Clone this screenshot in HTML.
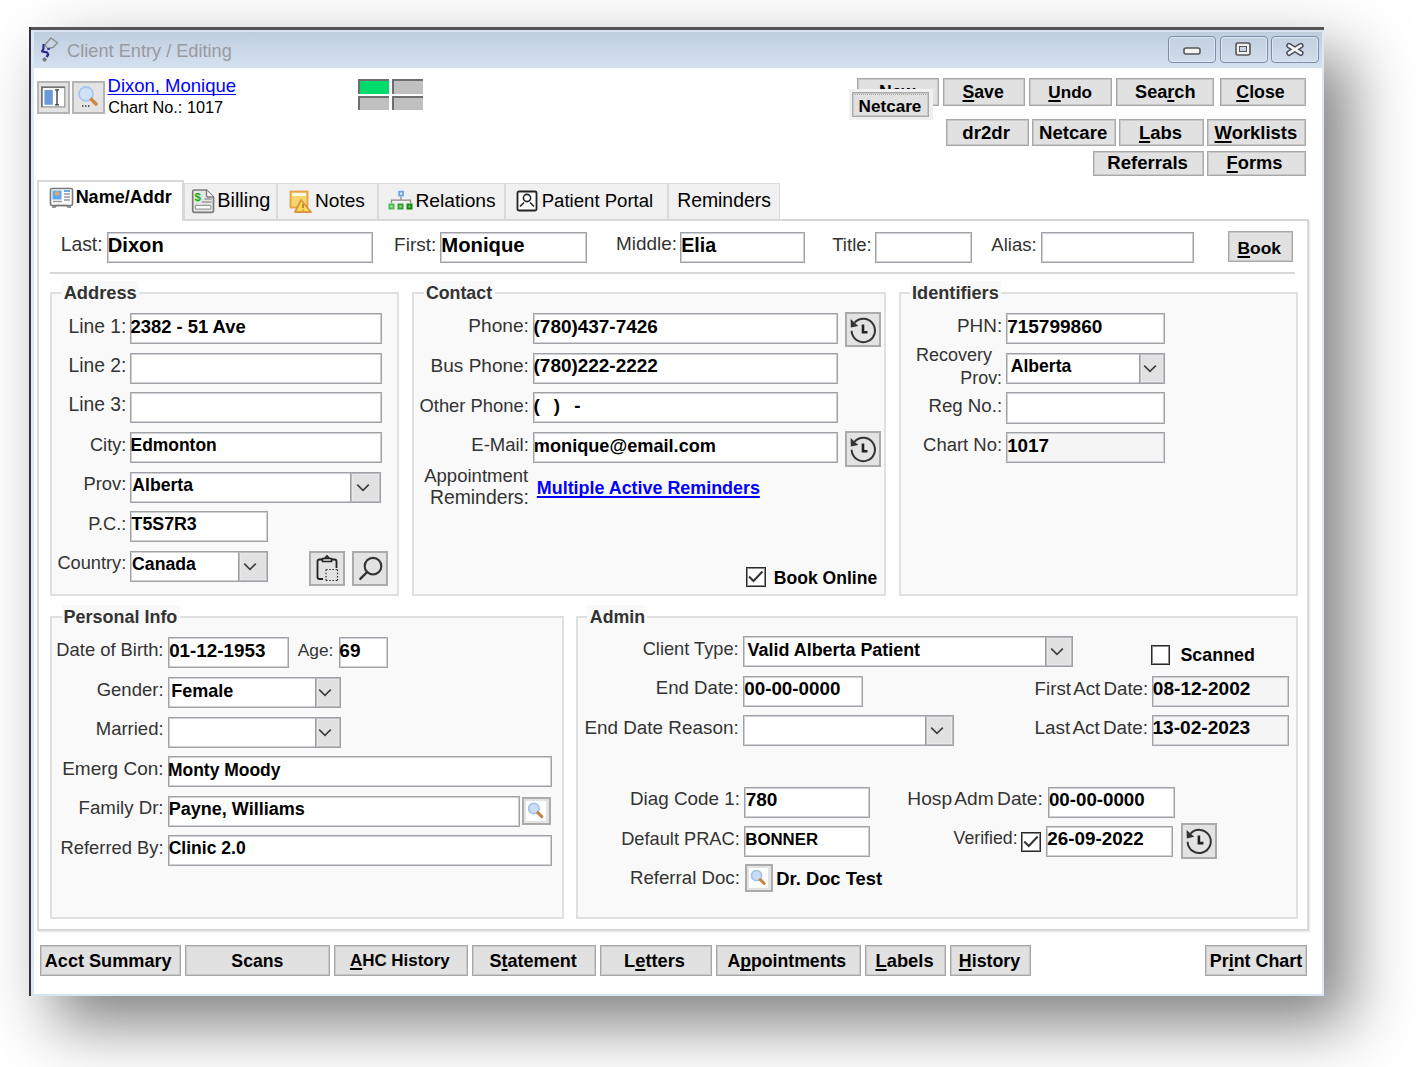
<!DOCTYPE html><html><head><meta charset="utf-8"><style>
html,body{margin:0;padding:0}
body{width:1422px;height:1067px;position:relative;overflow:hidden;background:#fff;font-family:'Liberation Sans', sans-serif}
.a{position:absolute}
svg{display:block}
.t{position:absolute;white-space:nowrap;line-height:1}
u{text-decoration:underline;text-decoration-thickness:1.5px;text-underline-offset:2px;text-decoration-skip-ink:none}
.t{text-decoration-skip-ink:none}
</style></head><body>
<div class="a" style="left:29px;top:27px;width:1295px;height:969px;box-shadow:25px 28px 60px rgba(0,0,0,0.5);background:#fff"></div>
<div class="a" style="left:29px;top:27px;width:1295px;height:41px;background:linear-gradient(#bccbdb,#d4e1f1)"></div>
<div class="a" style="left:31px;top:30px;width:1291px;height:1.5px;background:#dae3ee"></div>
<div class="a" style="left:29px;top:27px;width:1295px;height:3px;background:#555"></div>
<div class="a" style="left:29px;top:27px;width:2px;height:969px;background:#333"></div>
<div class="a" style="left:31px;top:30px;width:2.5px;height:966px;background:#dce8f5"></div>
<div class="a" style="left:1322px;top:30px;width:2px;height:966px;background:#dce8f5"></div>
<div class="a" style="left:31px;top:994px;width:1293px;height:2px;background:#d6e4f4"></div>
<div class="a" style="left:33.5px;top:68px;width:1288.5px;height:926px;background:#fff"></div>
<svg class="a" style="left:36px;top:34px" width="28" height="28" viewBox="0 0 28 28"><path d="M9 10.5 L15 4 L21.5 9 L17 13.5 L11.5 14.5 Z" fill="none" stroke="#8a8a8a" stroke-width="1.3" stroke-linejoin="round"/><path d="M7.6 10 L7.4 15 L6 17.3 L11 18.3 L12.3 20.5 L10.5 23" fill="none" stroke="#2b2b8c" stroke-width="2.2" stroke-linejoin="round"/><path d="M11.3 15.3 L14 14.6" stroke="#3a3a9a" stroke-width="2"/><circle cx="8.6" cy="25.6" r="2.1" fill="#7a7a7a"/></svg>
<div class="t" style="left:67.09px;top:42px;font-size:18.2px;font-weight:normal;color:#9a9a9e;">Client Entry / Editing</div>
<div class="a" style="left:1167.5px;top:36px;width:48.5px;height:27px;border:1.5px solid #7d8ca6;border-radius:4px;box-sizing:border-box;background:linear-gradient(#c3d0df,#d0dcea);box-shadow:inset 0 0 0 1px #dfe8f2"></div>
<div class="a" style="left:1219.5px;top:36px;width:48.0px;height:27px;border:1.5px solid #7d8ca6;border-radius:4px;box-sizing:border-box;background:linear-gradient(#c3d0df,#d0dcea);box-shadow:inset 0 0 0 1px #dfe8f2"></div>
<div class="a" style="left:1271px;top:36px;width:48px;height:27px;border:1.5px solid #7d8ca6;border-radius:4px;box-sizing:border-box;background:linear-gradient(#c3d0df,#d0dcea);box-shadow:inset 0 0 0 1px #dfe8f2"></div>
<svg class="a" style="left:1181px;top:45px" width="22" height="12" viewBox="0 0 22 12"><rect x="3" y="3" width="16" height="6" rx="2" fill="#f4f4f4" stroke="#555" stroke-width="1.6"/></svg>
<svg class="a" style="left:1234px;top:41px" width="18" height="18" viewBox="0 0 18 18"><rect x="2" y="2" width="14" height="12" rx="2" fill="#f4f4f4" stroke="#555" stroke-width="1.6"/><rect x="5.5" y="5.5" width="7" height="5" fill="#c8d4e2" stroke="#555" stroke-width="1"/></svg>
<svg class="a" style="left:1284px;top:41px" width="22" height="18" viewBox="0 0 22 18"><path d="M5 4.6 L16.8 12.2 M16.8 4.6 L5 12.2" stroke="#4a5160" stroke-width="5.6" stroke-linecap="round"/><path d="M5 4.6 L16.8 12.2 M16.8 4.6 L5 12.2" stroke="#f6f6f6" stroke-width="2.6" stroke-linecap="round"/></svg>
<div class="a" style="left:37px;top:80.5px;width:32.5px;height:33.0px;background:#e3e3e3;border:2px solid #b5b5b5;box-sizing:border-box"></div>
<svg class="a" style="left:37px;top:80.5px" width="33" height="33" viewBox="0 0 33 33"><rect x="4.8" y="6.3" width="23" height="19.6" fill="#fff" stroke="#aaa" stroke-width="1.6"/><path d="M4.8 25.9 V6.3 H27.8" fill="none" stroke="#6e6e6e" stroke-width="1.6"/><rect x="7.4" y="8.9" width="8.4" height="14.9" fill="#6b9bd6"/><path d="M18 8.9 h4 M20 8.9 v14.9 M18 23.8 h4" stroke="#333" stroke-width="1.3" fill="none"/></svg>
<div class="a" style="left:72px;top:80.5px;width:33px;height:33.0px;background:#e3e3e3;border:2px solid #b5b5b5;box-sizing:border-box"></div>
<svg class="a" style="left:72px;top:80.5px" width="33" height="33" viewBox="0 0 33 33"><circle cx="14" cy="13" r="7" fill="#cfe2f7" stroke="#a9c8ee" stroke-width="1.8"/><path d="M19.5 18.5 L24 23" stroke="#c88a45" stroke-width="3.6" stroke-linecap="round"/><path d="M10 25 h1.4 M13 25 h1.4 M16 25 h1.4" stroke="#333" stroke-width="1.4"/></svg>
<div class="t" style="left:107.52px;top:77px;font-size:18.5px;font-weight:normal;color:#0000ff;text-decoration:underline;text-decoration-thickness:1.2px;text-underline-offset:2px">Dixon, Monique</div>
<div class="t" style="left:108.18px;top:99px;font-size:16.3px;font-weight:normal;color:#000;">Chart No.: 1017</div>
<div class="a" style="left:358px;top:79px;width:31px;height:14.5px;background:#00dc6b;border-top:2.5px solid #6e6e6e;border-left:2.5px solid #6e6e6e;box-sizing:border-box"></div>
<div class="a" style="left:391.5px;top:79px;width:31.0px;height:14.5px;background:#c0c0c0;border-top:2.5px solid #6e6e6e;border-left:2.5px solid #6e6e6e;box-sizing:border-box"></div>
<div class="a" style="left:358px;top:96px;width:31px;height:14px;background:#c0c0c0;border-top:2.5px solid #6e6e6e;border-left:2.5px solid #6e6e6e;box-sizing:border-box"></div>
<div class="a" style="left:391.5px;top:96px;width:31.0px;height:14px;background:#c0c0c0;border-top:2.5px solid #6e6e6e;border-left:2.5px solid #6e6e6e;box-sizing:border-box"></div>
<div class="a" style="left:857px;top:77.5px;width:81.5px;height:28.0px;background:#e1e1e1;border:1px solid #a8a8a8;box-shadow:inset 0 0 0 1px #c8c8c8;box-sizing:border-box"></div>
<div class="t" style="left:878.94px;top:84px;font-size:17.7px;font-weight:bold;color:#000">New</div>
<div class="a" style="left:942.5px;top:77.5px;width:82.5px;height:28.0px;background:#e1e1e1;border:1px solid #a8a8a8;box-shadow:inset 0 0 0 1px #c8c8c8;box-sizing:border-box"></div>
<div class="t" style="left:962.47px;top:84px;font-size:17.67px;font-weight:bold;color:#000"><u>S</u>ave</div>
<div class="a" style="left:1029px;top:77.5px;width:83px;height:28.0px;background:#e1e1e1;border:1px solid #a8a8a8;box-shadow:inset 0 0 0 1px #c8c8c8;box-sizing:border-box"></div>
<div class="t" style="left:1048.37px;top:84px;font-size:17.11px;font-weight:bold;color:#000"><u>U</u>ndo</div>
<div class="a" style="left:1115.5px;top:77.5px;width:98.5px;height:28.0px;background:#e1e1e1;border:1px solid #a8a8a8;box-shadow:inset 0 0 0 1px #c8c8c8;box-sizing:border-box"></div>
<div class="t" style="left:1135.06px;top:83px;font-size:18.12px;font-weight:bold;color:#000">Sea<u>r</u>ch</div>
<div class="a" style="left:1219.5px;top:77.5px;width:86.0px;height:28.0px;background:#e1e1e1;border:1px solid #a8a8a8;box-shadow:inset 0 0 0 1px #c8c8c8;box-sizing:border-box"></div>
<div class="t" style="left:1236.29px;top:84px;font-size:17.81px;font-weight:bold;color:#000"><u>C</u>lose</div>
<div class="a" style="left:849px;top:89px;width:84px;height:31px;background:#f0f0f0"></div>
<div class="a" style="left:852px;top:92px;width:77px;height:25px;background:#e1e1e1;border:1px solid #a8a8a8;box-shadow:inset 0 0 0 1px #c8c8c8;box-sizing:border-box"></div>
<div class="t" style="left:858.59px;top:98px;font-size:17.11px;font-weight:bold;color:#000">Netcare</div>
<div class="a" style="left:855px;top:94px;width:71px;height:1px;border-top:1px dotted #a8a8a8"></div>
<div class="a" style="left:945.5px;top:118.5px;width:83.0px;height:27.0px;background:#e1e1e1;border:1px solid #a8a8a8;box-shadow:inset 0 0 0 1px #c8c8c8;box-sizing:border-box"></div>
<div class="t" style="left:962.35px;top:124px;font-size:18.64px;font-weight:bold;color:#000">dr2dr</div>
<div class="a" style="left:1032px;top:118.5px;width:83.5px;height:27.0px;background:#e1e1e1;border:1px solid #a8a8a8;box-shadow:inset 0 0 0 1px #c8c8c8;box-sizing:border-box"></div>
<div class="t" style="left:1038.99px;top:124px;font-size:18.63px;font-weight:bold;color:#000">Netcare</div>
<div class="a" style="left:1119px;top:118.5px;width:84.5px;height:27.0px;background:#e1e1e1;border:1px solid #a8a8a8;box-shadow:inset 0 0 0 1px #c8c8c8;box-sizing:border-box"></div>
<div class="t" style="left:1138.9px;top:124px;font-size:18.43px;font-weight:bold;color:#000"><u>L</u>abs</div>
<div class="a" style="left:1207px;top:118.5px;width:98.5px;height:27.0px;background:#e1e1e1;border:1px solid #a8a8a8;box-shadow:inset 0 0 0 1px #c8c8c8;box-sizing:border-box"></div>
<div class="t" style="left:1214.6px;top:124px;font-size:18.42px;font-weight:bold;color:#000"><u>W</u>orklists</div>
<div class="a" style="left:1093px;top:150.5px;width:110.5px;height:25.0px;background:#e1e1e1;border:1px solid #a8a8a8;box-shadow:inset 0 0 0 1px #c8c8c8;box-sizing:border-box"></div>
<div class="t" style="left:1107.29px;top:154px;font-size:18.63px;font-weight:bold;color:#000">Referrals</div>
<div class="a" style="left:1207px;top:150.5px;width:98.5px;height:25.0px;background:#e1e1e1;border:1px solid #a8a8a8;box-shadow:inset 0 0 0 1px #c8c8c8;box-sizing:border-box"></div>
<div class="t" style="left:1226.61px;top:154px;font-size:18.27px;font-weight:bold;color:#000"><u>F</u>orms</div>
<div class="a" style="left:183.5px;top:183px;width:93.7px;height:37px;background:#f0f0f0;border:1.5px solid #dadada;box-sizing:border-box"></div>
<div class="a" style="left:277.2px;top:183px;width:100.8px;height:37px;background:#f0f0f0;border:1.5px solid #dadada;box-sizing:border-box"></div>
<div class="a" style="left:378px;top:183px;width:126.5px;height:37px;background:#f0f0f0;border:1.5px solid #dadada;box-sizing:border-box"></div>
<div class="a" style="left:504.5px;top:183px;width:163.0px;height:37px;background:#f0f0f0;border:1.5px solid #dadada;box-sizing:border-box"></div>
<div class="a" style="left:667.5px;top:183px;width:112.5px;height:37px;background:#f0f0f0;border:1.5px solid #dadada;box-sizing:border-box"></div>
<div class="a" style="left:37px;top:219px;width:1272px;height:712px;background:#fff;border:2px solid #d8d8d8;box-sizing:border-box;box-shadow:1.5px 1.5px 0 #eeeeee"></div>
<div class="a" style="left:37px;top:179.5px;width:147px;height:41.5px;background:#fff;border:2px solid #d8d8d8;border-bottom:none;box-sizing:border-box"></div>
<svg class="a" style="left:48.5px;top:186.5px" width="25" height="22" viewBox="0 0 25 22"><rect x="1.5" y="1.5" width="22" height="17" rx="1.5" fill="#fff" stroke="#777" stroke-width="1.6"/><path d="M3 20 h3 l1.5 -1.5 h10 l1.5 1.5 h3" fill="none" stroke="#777" stroke-width="1.6"/><rect x="3.5" y="3.5" width="9" height="9" fill="#5ea8f0"/><circle cx="8" cy="6.5" r="2.2" fill="#e8a46a"/><path d="M15 4 h6" stroke="#3a8fe0" stroke-width="1.5"/><path d="M15 7 h6 M15 10 h6 M15 13 h6 M4 14.5 h9" stroke="#999" stroke-width="1.3"/></svg>
<div class="t" style="left:75.63px;top:188px;font-size:18px;font-weight:bold;color:#000;">Name/Addr</div>
<svg class="a" style="left:191px;top:187.5px" width="25" height="26" viewBox="0 0 25 26"><path d="M3.5 2 H15.5 L22.5 9 V22.5 Q22.5 24.3 20.7 24.3 H3.5 Q1.7 24.3 1.7 22.5 V3.8 Q1.7 2 3.5 2 Z" fill="#e6e6e6" stroke="#7c7c7c" stroke-width="1.7"/><path d="M15.5 2.3 V7.5 Q15.5 9 17 9 H22.3" fill="#fafafa" stroke="#7c7c7c" stroke-width="1.4"/><text x="3.6" y="12.6" font-size="11.5" font-weight="bold" fill="#14b014" font-family="Liberation Sans">$</text><path d="M13.5 11 h7 M11 14 h9.5" stroke="#9a9a9a" stroke-width="1.3"/><rect x="4.3" y="17.3" width="15.5" height="3.8" rx="1" fill="#fff" stroke="#9a9a9a" stroke-width="1.2"/></svg>
<div class="t" style="left:217.21px;top:191px;font-size:19.92px;font-weight:normal;color:#000;">Billing</div>
<svg class="a" style="left:288.5px;top:189.5px" width="24" height="24" viewBox="0 0 24 24"><rect x="1.5" y="1.5" width="17" height="16" fill="#f6d56a" stroke="#e9a04a" stroke-width="1.8"/><rect x="3" y="3" width="14" height="3" fill="#fff8e0"/><path d="M12 10 L22 22 H6 Z" fill="#f7dc5a" stroke="#dc9442" stroke-width="1.8" stroke-linejoin="round"/><path d="M14 14 v4 M14 19.5 v1" stroke="#a0701e" stroke-width="1.4"/></svg>
<div class="t" style="left:314.97px;top:191px;font-size:19.12px;font-weight:normal;color:#000;">Notes</div>
<svg class="a" style="left:387.5px;top:189.5px" width="26" height="21" viewBox="0 0 26 21"><rect x="10.3" y="0.8" width="5.6" height="5.6" fill="#6aa2e8"/><rect x="12" y="2.5" width="2.2" height="2.2" fill="#d8e6f8"/><path d="M3.5 13 V10.2 H22.5 V13 M13 6.5 V10.2" fill="none" stroke="#8a8a8a" stroke-width="1.3"/><rect x="0.5" y="13.5" width="6" height="6" fill="#4cb84c"/><rect x="2.4" y="15.4" width="2.2" height="2.2" fill="#b8e2b8"/><rect x="9.5" y="13.5" width="6" height="6" fill="#2fa02f"/><rect x="11.4" y="15.4" width="2.2" height="2.2" fill="#9fd49f"/><rect x="18.5" y="13.5" width="6" height="6" fill="#128a12"/><rect x="20.4" y="15.4" width="2.2" height="2.2" fill="#6cbf6c"/></svg>
<div class="t" style="left:415.46px;top:191px;font-size:19.24px;font-weight:normal;color:#000;">Relations</div>
<svg class="a" style="left:515.5px;top:189.5px" width="22" height="22" viewBox="0 0 22 22"><rect x="1.5" y="1.5" width="19" height="19" rx="1.5" fill="#fff" stroke="#222" stroke-width="1.8"/><circle cx="11" cy="8" r="3.6" fill="none" stroke="#222" stroke-width="1.6"/><path d="M4 16.5 L8 12.5 M18 16.5 L14 12.5" stroke="#222" stroke-width="1.6"/></svg>
<div class="t" style="left:541.71px;top:192px;font-size:18.58px;font-weight:normal;color:#000;">Patient Portal</div>
<div class="t" style="left:677.15px;top:191px;font-size:19.39px;font-weight:normal;color:#000;">Reminders</div>
<div class="t" style="left:60.65px;top:235px;font-size:19.35px;font-weight:normal;color:#333;">Last:</div>
<div class="a" style="left:107px;top:231.5px;width:265.5px;height:31.0px;background:#fff;border:1px solid #a0a2a8;box-shadow:inset 0 0 0 1px #cfd0d4;box-sizing:border-box"></div>
<div class="t" style="left:107.79px;top:235px;font-size:20.15px;font-weight:bold;color:#000;">Dixon</div>
<div class="t" style="left:394.08px;top:235px;font-size:18.98px;font-weight:normal;color:#333;">First:</div>
<div class="a" style="left:440.3px;top:231.5px;width:146.5px;height:31.0px;background:#fff;border:1px solid #a0a2a8;box-shadow:inset 0 0 0 1px #cfd0d4;box-sizing:border-box"></div>
<div class="t" style="left:441.28px;top:235px;font-size:20.27px;font-weight:bold;color:#000;">Monique</div>
<div class="t" style="left:615.98px;top:235px;font-size:18.95px;font-weight:normal;color:#333;">Middle:</div>
<div class="a" style="left:680.2px;top:231.5px;width:124.4px;height:31.0px;background:#fff;border:1px solid #a0a2a8;box-shadow:inset 0 0 0 1px #cfd0d4;box-sizing:border-box"></div>
<div class="t" style="left:681.22px;top:236px;font-size:19.65px;font-weight:bold;color:#000;">Elia</div>
<div class="t" style="left:832.23px;top:236px;font-size:18.56px;font-weight:normal;color:#333;">Title:</div>
<div class="a" style="left:875px;top:231.5px;width:97px;height:31.0px;background:#fff;border:1px solid #a0a2a8;box-shadow:inset 0 0 0 1px #cfd0d4;box-sizing:border-box"></div>
<div class="t" style="left:991.3px;top:236px;font-size:18.56px;font-weight:normal;color:#333;">Alias:</div>
<div class="a" style="left:1041.1px;top:231.5px;width:152.9px;height:31.0px;background:#fff;border:1px solid #a0a2a8;box-shadow:inset 0 0 0 1px #cfd0d4;box-sizing:border-box"></div>
<div class="a" style="left:1228.4px;top:231px;width:64.4px;height:31.3px;background:#e1e1e1;border:1px solid #a8a8a8;box-shadow:inset 0 0 0 1px #c8c8c8;box-sizing:border-box"></div>
<div class="t" style="left:1237.47px;top:240px;font-size:17.41px;font-weight:bold;color:#000"><u>B</u>ook</div>
<div class="a" style="left:50px;top:271.5px;width:1245px;height:2.0px;background:#d8d8d8"></div>
<div class="a" style="left:50px;top:291.5px;width:348.5px;height:304.5px;background:#f9f9f9;border:2px solid #e0e0e0;box-sizing:border-box"></div>
<div class="a" style="left:61.1px;top:280.5px;width:78.0px;height:19.0px;background:#f9f9f9"></div>
<div class="t" style="left:63.64px;top:284px;font-size:18.3px;font-weight:bold;color:#333;">Address</div>
<div class="t" style="left:68.46px;top:317px;font-size:19.29px;font-weight:normal;color:#333;">Line 1:</div>
<div class="t" style="left:68.46px;top:356px;font-size:19.29px;font-weight:normal;color:#333;">Line 2:</div>
<div class="t" style="left:68.46px;top:395px;font-size:19.29px;font-weight:normal;color:#333;">Line 3:</div>
<div class="t" style="left:89.99px;top:436px;font-size:18.17px;font-weight:normal;color:#333;">City:</div>
<div class="t" style="left:83.43px;top:475px;font-size:18.38px;font-weight:normal;color:#333;">Prov:</div>
<div class="t" style="left:88.14px;top:515px;font-size:18.23px;font-weight:normal;color:#333;">P.C.:</div>
<div class="t" style="left:57.39px;top:554px;font-size:18.24px;font-weight:normal;color:#333;">Country:</div>
<div class="a" style="left:130px;top:313.2px;width:251.5px;height:31.2px;background:#fff;border:1px solid #a0a2a8;box-shadow:inset 0 0 0 1px #cfd0d4;box-sizing:border-box"></div>
<div class="a" style="left:130px;top:352.8px;width:251.5px;height:31.2px;background:#fff;border:1px solid #a0a2a8;box-shadow:inset 0 0 0 1px #cfd0d4;box-sizing:border-box"></div>
<div class="a" style="left:130px;top:392.3px;width:251.5px;height:31.2px;background:#fff;border:1px solid #a0a2a8;box-shadow:inset 0 0 0 1px #cfd0d4;box-sizing:border-box"></div>
<div class="a" style="left:130px;top:431.8px;width:251.5px;height:31.2px;background:#fff;border:1px solid #a0a2a8;box-shadow:inset 0 0 0 1px #cfd0d4;box-sizing:border-box"></div>
<div class="t" style="left:130.46px;top:318px;font-size:18.4px;font-weight:bold;color:#000;">2382 - 51 Ave</div>
<div class="t" style="left:130.57px;top:437px;font-size:17.43px;font-weight:bold;color:#000;">Edmonton</div>
<div class="a" style="left:130px;top:471.5px;width:251px;height:31.5px;background:#fff;border:1px solid #a0a2a8;box-shadow:inset 0 0 0 1px #cfd0d4;box-sizing:border-box"></div>
<div class="a" style="left:350px;top:471.5px;width:31px;height:31.5px;background:#e1e1e1;border:1px solid #9fa1a6;box-shadow:inset 0 0 0 1px #b9bbbf, inset 0 0 0 2px #e9e9e9;box-sizing:border-box"></div>
<div class="a" style="left:356.3px;top:482.75px;width:14px;height:9px"><svg style="display:block" width="14" height="9" viewBox="0 0 14 9"><path d="M1.2 1.6 L7 7.4 L12.8 1.6" fill="none" stroke="#3c3c3c" stroke-width="1.6"/></svg></div>
<div class="t" style="left:132.36px;top:477px;font-size:17.58px;font-weight:bold;color:#000;">Alberta</div>
<div class="a" style="left:130px;top:511px;width:137.5px;height:31.3px;background:#fff;border:1px solid #a0a2a8;box-shadow:inset 0 0 0 1px #cfd0d4;box-sizing:border-box"></div>
<div class="t" style="left:131.52px;top:516px;font-size:17.79px;font-weight:bold;color:#000;">T5S7R3</div>
<div class="a" style="left:130px;top:550.5px;width:137.5px;height:31.3px;background:#fff;border:1px solid #a0a2a8;box-shadow:inset 0 0 0 1px #cfd0d4;box-sizing:border-box"></div>
<div class="a" style="left:237.5px;top:550.5px;width:30.0px;height:31.3px;background:#e1e1e1;border:1px solid #9fa1a6;box-shadow:inset 0 0 0 1px #b9bbbf, inset 0 0 0 2px #e9e9e9;box-sizing:border-box"></div>
<div class="a" style="left:243.3px;top:561.65px;width:14px;height:9px"><svg style="display:block" width="14" height="9" viewBox="0 0 14 9"><path d="M1.2 1.6 L7 7.4 L12.8 1.6" fill="none" stroke="#3c3c3c" stroke-width="1.6"/></svg></div>
<div class="t" style="left:132.09px;top:556px;font-size:17.68px;font-weight:bold;color:#000;">Canada</div>
<div class="a" style="left:309px;top:550.5px;width:36px;height:35.5px;background:#e3e3e3;border:2px solid #ababab;box-sizing:border-box"></div>
<svg class="a" style="left:309px;top:550.5px" width="36" height="36" viewBox="0 0 36 36"><path d="M13 8.5 H10.5 Q8.5 8.5 8.5 10.5 V26 Q8.5 28 10.5 28 H14" fill="none" stroke="#222" stroke-width="1.8"/><path d="M23 8.5 H25.5 Q27.5 8.5 27.5 10.5 V17" fill="none" stroke="#222" stroke-width="1.8"/><path d="M13.5 7.5 H22.5 V10.5 H13.5 Z M15.5 7.5 L18 5 L20.5 7.5" fill="none" stroke="#222" stroke-width="1.6"/><path d="M17 18.5 H28.5 M17 29.5 H28.5 M17 18.5 V29.5 M28.5 18.5 V29.5" stroke="#333" stroke-width="1.2" stroke-dasharray="1.6 1.6"/></svg>
<div class="a" style="left:351.5px;top:550.5px;width:36.0px;height:35.5px;background:#e3e3e3;border:2px solid #ababab;box-sizing:border-box"></div>
<svg class="a" style="left:351.5px;top:550.5px" width="36" height="36" viewBox="0 0 36 36"><circle cx="21" cy="15.2" r="8.3" fill="none" stroke="#333" stroke-width="2.1"/><path d="M15.2 21 L8.3 27.9" stroke="#333" stroke-width="2.4" stroke-linecap="round"/></svg>
<div class="a" style="left:412px;top:291.5px;width:473.5px;height:304.5px;background:#f9f9f9;border:2px solid #e0e0e0;box-sizing:border-box"></div>
<div class="a" style="left:423.6px;top:280.5px;width:71.3px;height:19.0px;background:#f9f9f9"></div>
<div class="t" style="left:425.89px;top:285px;font-size:17.79px;font-weight:bold;color:#333;">Contact</div>
<div class="t" style="left:468.37px;top:316px;font-size:19.13px;font-weight:normal;color:#333;">Phone:</div>
<div class="t" style="left:430.58px;top:356px;font-size:19.02px;font-weight:normal;color:#333;">Bus Phone:</div>
<div class="t" style="left:419.47px;top:397px;font-size:18.4px;font-weight:normal;color:#333;">Other Phone:</div>
<div class="t" style="left:471.32px;top:436px;font-size:18.5px;font-weight:normal;color:#333;">E-Mail:</div>
<div class="a" style="left:533px;top:313.2px;width:305px;height:31.2px;background:#fff;border:1px solid #a0a2a8;box-shadow:inset 0 0 0 1px #cfd0d4;box-sizing:border-box"></div>
<div class="a" style="left:533px;top:352.8px;width:305px;height:31.2px;background:#fff;border:1px solid #a0a2a8;box-shadow:inset 0 0 0 1px #cfd0d4;box-sizing:border-box"></div>
<div class="a" style="left:533px;top:392.3px;width:305px;height:31.2px;background:#fff;border:1px solid #a0a2a8;box-shadow:inset 0 0 0 1px #cfd0d4;box-sizing:border-box"></div>
<div class="a" style="left:533px;top:431.8px;width:305px;height:31.2px;background:#fff;border:1px solid #a0a2a8;box-shadow:inset 0 0 0 1px #cfd0d4;box-sizing:border-box"></div>
<div class="t" style="left:533.55px;top:318px;font-size:18.95px;font-weight:bold;color:#000;">(780)437-7426</div>
<div class="t" style="left:533.55px;top:357px;font-size:18.96px;font-weight:bold;color:#000;">(780)222-2222</div>
<div class="t" style="left:533.56px;top:397px;font-size:18.8px;font-weight:bold;color:#000;">(</div>
<div class="t" style="left:553.84px;top:397px;font-size:18.8px;font-weight:bold;color:#000;">)</div>
<div class="t" style="left:574.15px;top:397px;font-size:18.8px;font-weight:bold;color:#000;">-</div>
<div class="t" style="left:533.82px;top:437px;font-size:18.16px;font-weight:bold;color:#000;">monique@email.com</div>
<div class="a" style="left:844.7px;top:311.8px;width:36.2px;height:35.6px;background:#e3e3e3;border:2px solid #ababab;box-sizing:border-box"></div>
<svg class="a" style="left:844.7px;top:311.8px" width="36.19999999999993" height="35.599999999999966" viewBox="0 0 36 35"><path d="M6.6 18.5 A11.6 11.6 0 1 0 9.6 10.4" fill="none" stroke="#333" stroke-width="2"/><path d="M5.6 6.8 L5.8 15.2 L13.2 13.6 Z" fill="#333"/><path d="M17.9 12.2 V19.9 H22.4" fill="none" stroke="#222" stroke-width="2.6"/></svg>
<div class="a" style="left:844.7px;top:431px;width:36.2px;height:35.6px;background:#e3e3e3;border:2px solid #ababab;box-sizing:border-box"></div>
<svg class="a" style="left:844.7px;top:431px" width="36.19999999999993" height="35.60000000000002" viewBox="0 0 36 35"><path d="M6.6 18.5 A11.6 11.6 0 1 0 9.6 10.4" fill="none" stroke="#333" stroke-width="2"/><path d="M5.6 6.8 L5.8 15.2 L13.2 13.6 Z" fill="#333"/><path d="M17.9 12.2 V19.9 H22.4" fill="none" stroke="#222" stroke-width="2.6"/></svg>
<div class="t" style="left:424.2px;top:467px;font-size:18.54px;font-weight:normal;color:#333;">Appointment</div>
<div class="t" style="left:429.95px;top:488px;font-size:19.37px;font-weight:normal;color:#333;">Reminders:</div>
<div class="t" style="left:536.84px;top:480px;font-size:17.9px;font-weight:bold;color:#0000ff;text-decoration:underline;text-decoration-thickness:1.5px;text-underline-offset:1.5px">Multiple Active Reminders</div>
<div class="a" style="left:746px;top:567px;width:19.5px;height:19.5px;background:#fff;border:1px solid #2a2a2a;box-shadow:inset 0 0 0 1px #8c8c8c;box-sizing:border-box"></div>
<svg class="a" style="left:746px;top:567px" width="19.5" height="19.5" viewBox="0 0 19.5 19.5"><path d="M3 9.5 L7.5 14 L16.5 4.5" fill="none" stroke="#333" stroke-width="2"/></svg>
<div class="t" style="left:773.86px;top:570px;font-size:17.56px;font-weight:bold;color:#000;">Book Online</div>
<div class="a" style="left:898.5px;top:291.5px;width:399.0px;height:304.5px;background:#f9f9f9;border:2px solid #e0e0e0;box-sizing:border-box"></div>
<div class="a" style="left:910.2px;top:280.5px;width:90.9px;height:19.0px;background:#f9f9f9"></div>
<div class="t" style="left:912.02px;top:284px;font-size:18.16px;font-weight:bold;color:#333;">Identifiers</div>
<div class="t" style="left:956.99px;top:317px;font-size:18.92px;font-weight:normal;color:#333;">PHN:</div>
<div class="a" style="left:1006.3px;top:313.2px;width:159.1px;height:31.2px;background:#fff;border:1px solid #a0a2a8;box-shadow:inset 0 0 0 1px #cfd0d4;box-sizing:border-box"></div>
<div class="t" style="left:1007.14px;top:317px;font-size:19.03px;font-weight:bold;color:#000;">715799860</div>
<div class="t" style="left:916.06px;top:346px;font-size:18.0px;font-weight:normal;color:#333;">Recovery</div>
<div class="t" style="left:960.37px;top:370px;font-size:17.87px;font-weight:normal;color:#333;">Prov:</div>
<div class="a" style="left:1006.3px;top:352.8px;width:159.1px;height:31.2px;background:#fff;border:1px solid #a0a2a8;box-shadow:inset 0 0 0 1px #cfd0d4;box-sizing:border-box"></div>
<div class="a" style="left:1138.6px;top:352.8px;width:26.8px;height:31.2px;background:#e1e1e1;border:1px solid #9fa1a6;box-shadow:inset 0 0 0 1px #b9bbbf, inset 0 0 0 2px #e9e9e9;box-sizing:border-box"></div>
<div class="a" style="left:1142.8px;top:363.9px;width:14px;height:9px"><svg style="display:block" width="14" height="9" viewBox="0 0 14 9"><path d="M1.2 1.6 L7 7.4 L12.8 1.6" fill="none" stroke="#3c3c3c" stroke-width="1.6"/></svg></div>
<div class="t" style="left:1010.76px;top:358px;font-size:17.58px;font-weight:bold;color:#000;">Alberta</div>
<div class="t" style="left:928.41px;top:397px;font-size:18.68px;font-weight:normal;color:#333;">Reg No.:</div>
<div class="a" style="left:1006.3px;top:392.3px;width:159.1px;height:31.3px;background:#fff;border:1px solid #a0a2a8;box-shadow:inset 0 0 0 1px #cfd0d4;box-sizing:border-box"></div>
<div class="t" style="left:923.08px;top:436px;font-size:18.48px;font-weight:normal;color:#333;">Chart No:</div>
<div class="a" style="left:1006.3px;top:431.8px;width:159.1px;height:31.2px;background:#f5f5f5;border:1px solid #a0a2a8;box-shadow:inset 0 0 0 1px #cfd0d4;box-sizing:border-box"></div>
<div class="t" style="left:1007.17px;top:437px;font-size:18.78px;font-weight:bold;color:#000;">1017</div>
<div class="a" style="left:49.5px;top:616px;width:514.5px;height:302.5px;background:#f9f9f9;border:2px solid #e0e0e0;box-sizing:border-box"></div>
<div class="a" style="left:61.7px;top:605px;width:118.0px;height:19px;background:#f9f9f9"></div>
<div class="t" style="left:63.53px;top:608px;font-size:17.98px;font-weight:bold;color:#333;">Personal Info</div>
<div class="t" style="left:56.33px;top:641px;font-size:18.38px;font-weight:normal;color:#333;">Date of Birth:</div>
<div class="a" style="left:168px;top:637.2px;width:120.5px;height:30.8px;background:#fff;border:1px solid #a0a2a8;box-shadow:inset 0 0 0 1px #cfd0d4;box-sizing:border-box"></div>
<div class="t" style="left:169.15px;top:642px;font-size:18.83px;font-weight:bold;color:#000;">01-12-1953</div>
<div class="t" style="left:297.7px;top:642px;font-size:17.35px;font-weight:normal;color:#333;">Age:</div>
<div class="a" style="left:338.5px;top:637.2px;width:49.0px;height:30.8px;background:#fff;border:1px solid #a0a2a8;box-shadow:inset 0 0 0 1px #cfd0d4;box-sizing:border-box"></div>
<div class="t" style="left:339.33px;top:641px;font-size:19.04px;font-weight:bold;color:#000;">69</div>
<div class="t" style="left:96.67px;top:681px;font-size:18.53px;font-weight:normal;color:#333;">Gender:</div>
<div class="a" style="left:168px;top:677px;width:172.5px;height:31px;background:#fff;border:1px solid #a0a2a8;box-shadow:inset 0 0 0 1px #cfd0d4;box-sizing:border-box"></div>
<div class="a" style="left:314.5px;top:677px;width:26.0px;height:31px;background:#e1e1e1;border:1px solid #9fa1a6;box-shadow:inset 0 0 0 1px #b9bbbf, inset 0 0 0 2px #e9e9e9;box-sizing:border-box"></div>
<div class="a" style="left:318.3px;top:688.0px;width:14px;height:9px"><svg style="display:block" width="14" height="9" viewBox="0 0 14 9"><path d="M1.2 1.6 L7 7.4 L12.8 1.6" fill="none" stroke="#3c3c3c" stroke-width="1.6"/></svg></div>
<div class="t" style="left:171.13px;top:682px;font-size:18.03px;font-weight:bold;color:#000;">Female</div>
<div class="t" style="left:95.72px;top:720px;font-size:18.51px;font-weight:normal;color:#333;">Married:</div>
<div class="a" style="left:168px;top:716.5px;width:172.5px;height:31.0px;background:#fff;border:1px solid #a0a2a8;box-shadow:inset 0 0 0 1px #cfd0d4;box-sizing:border-box"></div>
<div class="a" style="left:314.5px;top:716.5px;width:26.0px;height:31.0px;background:#e1e1e1;border:1px solid #9fa1a6;box-shadow:inset 0 0 0 1px #b9bbbf, inset 0 0 0 2px #e9e9e9;box-sizing:border-box"></div>
<div class="a" style="left:318.3px;top:727.5px;width:14px;height:9px"><svg style="display:block" width="14" height="9" viewBox="0 0 14 9"><path d="M1.2 1.6 L7 7.4 L12.8 1.6" fill="none" stroke="#3c3c3c" stroke-width="1.6"/></svg></div>
<div class="t" style="left:62.18px;top:759px;font-size:19.01px;font-weight:normal;color:#333;">Emerg Con:</div>
<div class="a" style="left:168px;top:756px;width:384px;height:31px;background:#fff;border:1px solid #a0a2a8;box-shadow:inset 0 0 0 1px #cfd0d4;box-sizing:border-box"></div>
<div class="t" style="left:167.96px;top:762px;font-size:17.47px;font-weight:bold;color:#000;">Monty Moody</div>
<div class="t" style="left:78.61px;top:799px;font-size:18.65px;font-weight:normal;color:#333;">Family Dr:</div>
<div class="a" style="left:168px;top:795.5px;width:352px;height:31.0px;background:#fff;border:1px solid #a0a2a8;box-shadow:inset 0 0 0 1px #cfd0d4;box-sizing:border-box"></div>
<div class="t" style="left:168.73px;top:800px;font-size:18.05px;font-weight:bold;color:#000;">Payne, Williams</div>
<div class="a" style="left:522px;top:797px;width:29px;height:28px;background:#e3e3e3;border:2px solid #ababab;box-sizing:border-box"></div>
<div class="a" style="left:526.4px;top:801.2px;width:20.1px;height:19.6px;background:#fff"></div>
<svg class="a" style="left:522px;top:797px" width="29" height="28" viewBox="0 0 29 28"><circle cx="11.9" cy="11.5" r="5.3" fill="#c9ddf4" stroke="#9ec1ea" stroke-width="1.6"/><path d="M15.8 15.6 L19.8 19.6" stroke="#c4874a" stroke-width="3.2" stroke-linecap="round"/></svg>
<div class="t" style="left:60.53px;top:839px;font-size:18.36px;font-weight:normal;color:#333;">Referred By:</div>
<div class="a" style="left:168px;top:835px;width:384px;height:31px;background:#fff;border:1px solid #a0a2a8;box-shadow:inset 0 0 0 1px #cfd0d4;box-sizing:border-box"></div>
<div class="t" style="left:168.7px;top:840px;font-size:17.54px;font-weight:bold;color:#000;">Clinic 2.0</div>
<div class="a" style="left:575.5px;top:616px;width:722.0px;height:302.5px;background:#f9f9f9;border:2px solid #e0e0e0;box-sizing:border-box"></div>
<div class="a" style="left:587.3px;top:605px;width:59.7px;height:19px;background:#f9f9f9"></div>
<div class="t" style="left:589.86px;top:609px;font-size:17.75px;font-weight:bold;color:#333;">Admin</div>
<div class="t" style="left:642.69px;top:640px;font-size:18.24px;font-weight:normal;color:#333;">Client Type:</div>
<div class="a" style="left:742.5px;top:636.2px;width:330.0px;height:30.8px;background:#fff;border:1px solid #a0a2a8;box-shadow:inset 0 0 0 1px #cfd0d4;box-sizing:border-box"></div>
<div class="a" style="left:1045px;top:636.2px;width:27.5px;height:30.8px;background:#e1e1e1;border:1px solid #9fa1a6;box-shadow:inset 0 0 0 1px #b9bbbf, inset 0 0 0 2px #e9e9e9;box-sizing:border-box"></div>
<div class="a" style="left:1049.55px;top:647.1px;width:14px;height:9px"><svg style="display:block" width="14" height="9" viewBox="0 0 14 9"><path d="M1.2 1.6 L7 7.4 L12.8 1.6" fill="none" stroke="#3c3c3c" stroke-width="1.6"/></svg></div>
<div class="t" style="left:747.61px;top:642px;font-size:17.91px;font-weight:bold;color:#000;">Valid Alberta Patient</div>
<div class="a" style="left:1150.5px;top:645px;width:19.5px;height:19.5px;background:#fff;border:1px solid #2a2a2a;box-shadow:inset 0 0 0 1px #8c8c8c;box-sizing:border-box"></div>
<div class="t" style="left:1180.46px;top:647px;font-size:17.86px;font-weight:bold;color:#000;">Scanned</div>
<div class="t" style="left:655.81px;top:679px;font-size:18.64px;font-weight:normal;color:#333;">End Date:</div>
<div class="a" style="left:742.5px;top:675.5px;width:120.0px;height:31.0px;background:#fff;border:1px solid #a0a2a8;box-shadow:inset 0 0 0 1px #cfd0d4;box-sizing:border-box"></div>
<div class="t" style="left:744.25px;top:680px;font-size:18.81px;font-weight:bold;color:#000;">00-00-0000</div>
<div class="t" style="left:1034.6px;top:680px;font-size:18.74px;font-weight:normal;color:#333;word-spacing:-2px">First Act Date:</div>
<div class="a" style="left:1152px;top:675.5px;width:136.5px;height:31.0px;background:#f5f5f5;border:1px solid #a0a2a8;box-shadow:inset 0 0 0 1px #cfd0d4;box-sizing:border-box"></div>
<div class="t" style="left:1152.84px;top:679px;font-size:19.07px;font-weight:bold;color:#000;">08-12-2002</div>
<div class="t" style="left:584.39px;top:719px;font-size:18.89px;font-weight:normal;color:#333;">End Date Reason:</div>
<div class="a" style="left:742.5px;top:715px;width:211.5px;height:31px;background:#fff;border:1px solid #a0a2a8;box-shadow:inset 0 0 0 1px #cfd0d4;box-sizing:border-box"></div>
<div class="a" style="left:925px;top:715px;width:29px;height:31px;background:#e1e1e1;border:1px solid #9fa1a6;box-shadow:inset 0 0 0 1px #b9bbbf, inset 0 0 0 2px #e9e9e9;box-sizing:border-box"></div>
<div class="a" style="left:930.3px;top:726.0px;width:14px;height:9px"><svg style="display:block" width="14" height="9" viewBox="0 0 14 9"><path d="M1.2 1.6 L7 7.4 L12.8 1.6" fill="none" stroke="#3c3c3c" stroke-width="1.6"/></svg></div>
<div class="t" style="left:1034.59px;top:719px;font-size:18.89px;font-weight:normal;color:#333;word-spacing:-2px">Last Act Date:</div>
<div class="a" style="left:1152px;top:715px;width:136.5px;height:31px;background:#f5f5f5;border:1px solid #a0a2a8;box-shadow:inset 0 0 0 1px #cfd0d4;box-sizing:border-box"></div>
<div class="t" style="left:1152.45px;top:718px;font-size:19.12px;font-weight:bold;color:#000;">13-02-2023</div>
<div class="t" style="left:629.99px;top:790px;font-size:18.83px;font-weight:normal;color:#333;">Diag Code 1:</div>
<div class="a" style="left:744px;top:786.5px;width:126px;height:31.0px;background:#fff;border:1px solid #a0a2a8;box-shadow:inset 0 0 0 1px #cfd0d4;box-sizing:border-box"></div>
<div class="t" style="left:745.64px;top:790px;font-size:19.05px;font-weight:bold;color:#000;">780</div>
<div class="t" style="left:907.37px;top:789px;font-size:19.16px;font-weight:normal;color:#333;word-spacing:-2px">Hosp Adm Date:</div>
<div class="a" style="left:1047.5px;top:786.5px;width:127.0px;height:31.0px;background:#fff;border:1px solid #a0a2a8;box-shadow:inset 0 0 0 1px #cfd0d4;box-sizing:border-box"></div>
<div class="t" style="left:1048.95px;top:791px;font-size:18.73px;font-weight:bold;color:#000;">00-00-0000</div>
<div class="t" style="left:621.14px;top:830px;font-size:18.26px;font-weight:normal;color:#333;">Default PRAC:</div>
<div class="a" style="left:744px;top:826px;width:126px;height:31px;background:#fff;border:1px solid #a0a2a8;box-shadow:inset 0 0 0 1px #cfd0d4;box-sizing:border-box"></div>
<div class="t" style="left:745.31px;top:832px;font-size:16.8px;font-weight:bold;color:#000;">BONNER</div>
<div class="t" style="left:953.61px;top:830px;font-size:17.72px;font-weight:normal;color:#333;">Verified:</div>
<div class="a" style="left:1021px;top:832px;width:20px;height:19.5px;background:#fff;border:1px solid #2a2a2a;box-shadow:inset 0 0 0 1px #8c8c8c;box-sizing:border-box"></div>
<svg class="a" style="left:1021px;top:832px" width="20" height="19.5" viewBox="0 0 19.5 19.5"><path d="M3 9.5 L7.5 14 L16.5 4.5" fill="none" stroke="#333" stroke-width="2"/></svg>
<div class="a" style="left:1046px;top:826px;width:126.5px;height:31px;background:#fff;border:1px solid #a0a2a8;box-shadow:inset 0 0 0 1px #cfd0d4;box-sizing:border-box"></div>
<div class="t" style="left:1047.34px;top:830px;font-size:18.83px;font-weight:bold;color:#000;">26-09-2022</div>
<div class="a" style="left:1181px;top:823px;width:36px;height:35.5px;background:#e3e3e3;border:2px solid #ababab;box-sizing:border-box"></div>
<svg class="a" style="left:1181px;top:823px" width="36" height="35.5" viewBox="0 0 36 35"><path d="M6.6 18.5 A11.6 11.6 0 1 0 9.6 10.4" fill="none" stroke="#333" stroke-width="2"/><path d="M5.6 6.8 L5.8 15.2 L13.2 13.6 Z" fill="#333"/><path d="M17.9 12.2 V19.9 H22.4" fill="none" stroke="#222" stroke-width="2.6"/></svg>
<div class="t" style="left:630.01px;top:869px;font-size:18.65px;font-weight:normal;color:#333;">Referral Doc:</div>
<div class="a" style="left:744.5px;top:864px;width:28.0px;height:28px;background:#e3e3e3;border:2px solid #ababab;box-sizing:border-box"></div>
<div class="a" style="left:748.9px;top:868.2px;width:19.1px;height:19.6px;background:#fff"></div>
<svg class="a" style="left:744.5px;top:864px" width="28.0" height="28" viewBox="0 0 29 28"><circle cx="11.9" cy="11.5" r="5.3" fill="#c9ddf4" stroke="#9ec1ea" stroke-width="1.6"/><path d="M15.8 15.6 L19.8 19.6" stroke="#c4874a" stroke-width="3.2" stroke-linecap="round"/></svg>
<div class="t" style="left:776.31px;top:870px;font-size:18.36px;font-weight:bold;color:#000;">Dr. Doc Test</div>
<div class="a" style="left:40px;top:944.5px;width:140.5px;height:31.5px;background:#e1e1e1;border:1px solid #a8a8a8;box-shadow:inset 0 0 0 1px #c8c8c8;box-sizing:border-box"></div>
<div class="t" style="left:44.75px;top:952px;font-size:18.11px;font-weight:bold;color:#000">Acct Summary</div>
<div class="a" style="left:184.5px;top:944.5px;width:145.5px;height:31.5px;background:#e1e1e1;border:1px solid #a8a8a8;box-shadow:inset 0 0 0 1px #c8c8c8;box-sizing:border-box"></div>
<div class="t" style="left:231.37px;top:953px;font-size:17.67px;font-weight:bold;color:#000">Scans</div>
<div class="a" style="left:333.5px;top:944.5px;width:134.5px;height:31.5px;background:#e1e1e1;border:1px solid #a8a8a8;box-shadow:inset 0 0 0 1px #c8c8c8;box-sizing:border-box"></div>
<div class="t" style="left:349.98px;top:953px;font-size:16.96px;font-weight:bold;color:#000"><u>A</u>HC History</div>
<div class="a" style="left:472px;top:944.5px;width:124px;height:31.5px;background:#e1e1e1;border:1px solid #a8a8a8;box-shadow:inset 0 0 0 1px #c8c8c8;box-sizing:border-box"></div>
<div class="t" style="left:489.56px;top:952px;font-size:18.02px;font-weight:bold;color:#000">S<u>t</u>atement</div>
<div class="a" style="left:600px;top:944.5px;width:112px;height:31.5px;background:#e1e1e1;border:1px solid #a8a8a8;box-shadow:inset 0 0 0 1px #c8c8c8;box-sizing:border-box"></div>
<div class="t" style="left:624.11px;top:952px;font-size:18.24px;font-weight:bold;color:#000">L<u>e</u>tters</div>
<div class="a" style="left:716px;top:944.5px;width:144.5px;height:31.5px;background:#e1e1e1;border:1px solid #a8a8a8;box-shadow:inset 0 0 0 1px #c8c8c8;box-sizing:border-box"></div>
<div class="t" style="left:727.46px;top:953px;font-size:17.66px;font-weight:bold;color:#000">A<u>p</u>pointments</div>
<div class="a" style="left:864.5px;top:944.5px;width:81.5px;height:31.5px;background:#e1e1e1;border:1px solid #a8a8a8;box-shadow:inset 0 0 0 1px #c8c8c8;box-sizing:border-box"></div>
<div class="t" style="left:875.51px;top:952px;font-size:18.33px;font-weight:bold;color:#000"><u>L</u>abels</div>
<div class="a" style="left:950px;top:944.5px;width:81px;height:31.5px;background:#e1e1e1;border:1px solid #a8a8a8;box-shadow:inset 0 0 0 1px #c8c8c8;box-sizing:border-box"></div>
<div class="t" style="left:958.84px;top:953px;font-size:17.81px;font-weight:bold;color:#000"><u>H</u>istory</div>
<div class="a" style="left:1205.3px;top:944.5px;width:101.7px;height:31.5px;background:#e1e1e1;border:1px solid #a8a8a8;box-shadow:inset 0 0 0 1px #c8c8c8;box-sizing:border-box"></div>
<div class="t" style="left:1209.84px;top:953px;font-size:17.86px;font-weight:bold;color:#000">Pr<u>i</u>nt Chart</div>
</body></html>
